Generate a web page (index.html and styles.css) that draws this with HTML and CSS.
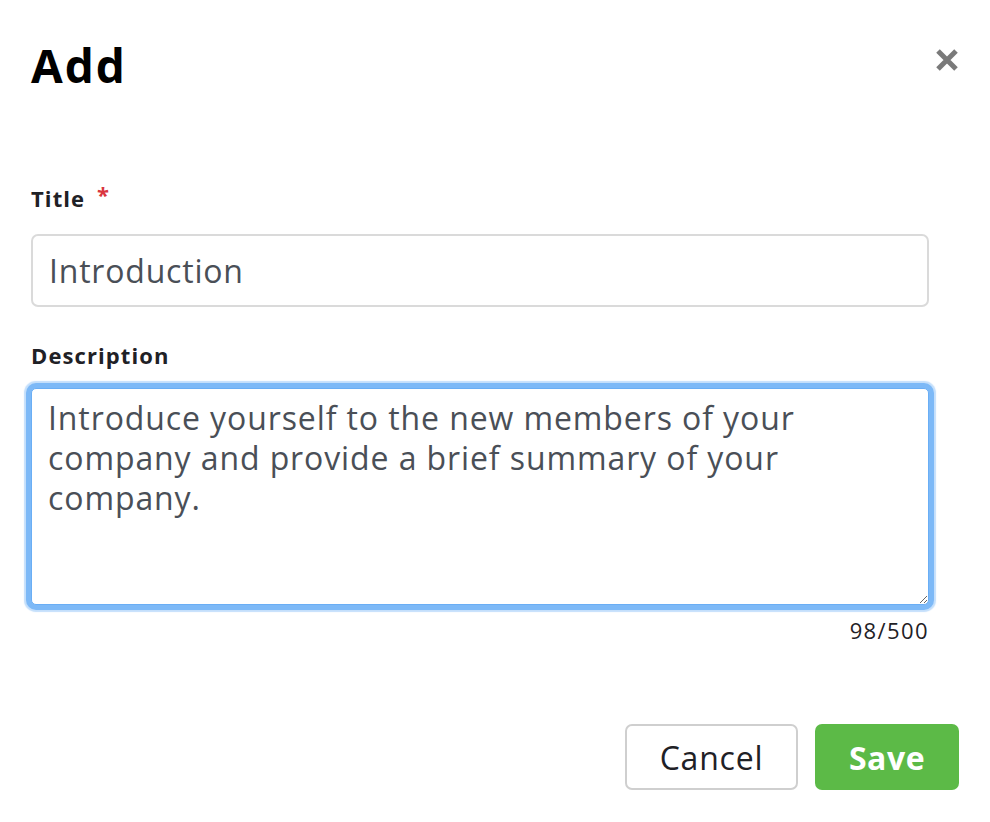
FILE: index.html
```html
<!DOCTYPE html>
<html lang="en">
<head>
<meta charset="utf-8">
<title>Add</title>
<link rel="stylesheet" href="styles.css">
</head>
<body>
<div class="dialog">
  <div class="header">
    <h1 class="title">Add</h1>
    <button class="close" aria-label="Close">
      <svg width="24" height="24" viewBox="0 0 24 24"><path d="M3 3 L21 21 M21 3 L3 21" stroke="#7a7a7a" stroke-width="5" stroke-linecap="butt"/></svg>
    </button>
  </div>
  <form class="form">
    <div class="field">
      <label class="label">Title <span class="req">*</span></label>
      <input class="input" type="text" value="Introduction">
    </div>
    <div class="field">
      <label class="label">Description</label>
      <textarea class="textarea">Introduce yourself to the new members of your company and provide a brief summary of your company.</textarea>
      <div class="counter">98/500</div>
    </div>
  </form>
  <div class="actions">
    <button class="btn btn-cancel" type="button">Cancel</button>
    <button class="btn btn-save" type="button">Save</button>
  </div>
</div>
</body>
</html>
```
FILE: styles.css
```css
html, body {
  margin: 0;
  padding: 0;
  background: #fff;
}
body {
  font-family: "Open Sans", "Liberation Sans", sans-serif;
  color: #1f2126;
}
.dialog {
  width: 990px;
  height: 822px;
  box-sizing: border-box;
  padding: 0 31px;
  display: flex;
  flex-direction: column;
}
.header {
  display: flex;
  justify-content: space-between;
  align-items: flex-start;
  height: 150px;
}
.title {
  margin: 37px 0 0;
  font-size: 46px;
  font-weight: 700;
  line-height: 56px;
  color: #000;
  letter-spacing: 2px;
}
.close {
  margin-top: 48px;
  padding: 0;
  border: 0;
  background: none;
  width: 24px;
  height: 24px;
  display: flex;
  align-items: center;
  justify-content: center;
}
.form {
  width: 898px;
  display: flex;
  flex-direction: column;
}
.field {
  display: flex;
  flex-direction: column;
}
.label {
  font-size: 22px;
  font-weight: 700;
  line-height: 28px;
  letter-spacing: 1.1px;
  color: #1f2126;
  margin-top: 34px;
  margin-bottom: 22px;
}
.field + .field .label {
  margin-top: 34px;
  margin-bottom: 13px;
}
.req {
  color: #d9363e;
  margin-left: 5px;
  position: relative;
  top: -4px;
}
.input {
  box-sizing: border-box;
  height: 73px;
  border: 2px solid #dadada;
  border-radius: 7px;
  padding: 0 16px;
  font-family: inherit;
  font-size: 32px;
  letter-spacing: 0.8px;
  color: #4a4f57;
  outline: none;
}
.textarea {
  box-sizing: border-box;
  height: 217px;
  margin-top: 6px;
  border: 1px solid #6aaef5;
  border-radius: 5px;
  box-shadow: 0 0 0 5px #7db9f7, 0 0 1px 7px rgba(125, 185, 247, 0.45);
  padding: 9px 16px;
  font-family: inherit;
  font-size: 32px;
  line-height: 40px;
  letter-spacing: 0.9px;
  color: #4a4f57;
  resize: vertical;
  outline: none;
}
.counter {
  text-align: right;
  font-size: 22px;
  line-height: 26px;
  letter-spacing: 1.4px;
  color: #1f2126;
  margin-top: 12px;
}
.actions {
  margin-top: auto;
  margin-bottom: 32px;
  display: flex;
  justify-content: flex-end;
  gap: 17px;
}
.btn {
  height: 66px;
  border-radius: 7px;
  font-family: inherit;
  font-size: 32px;
  padding: 0;
  cursor: pointer;
}
.btn-cancel {
  width: 173px;
  background: #fff;
  border: 2px solid #cfcfcf;
  color: #1f2126;
  letter-spacing: 0.8px;
}
.btn-save {
  width: 144px;
  background: #5cba47;
  border: 0;
  color: #fff;
  font-weight: 700;
  letter-spacing: 0.5px;
}
```
